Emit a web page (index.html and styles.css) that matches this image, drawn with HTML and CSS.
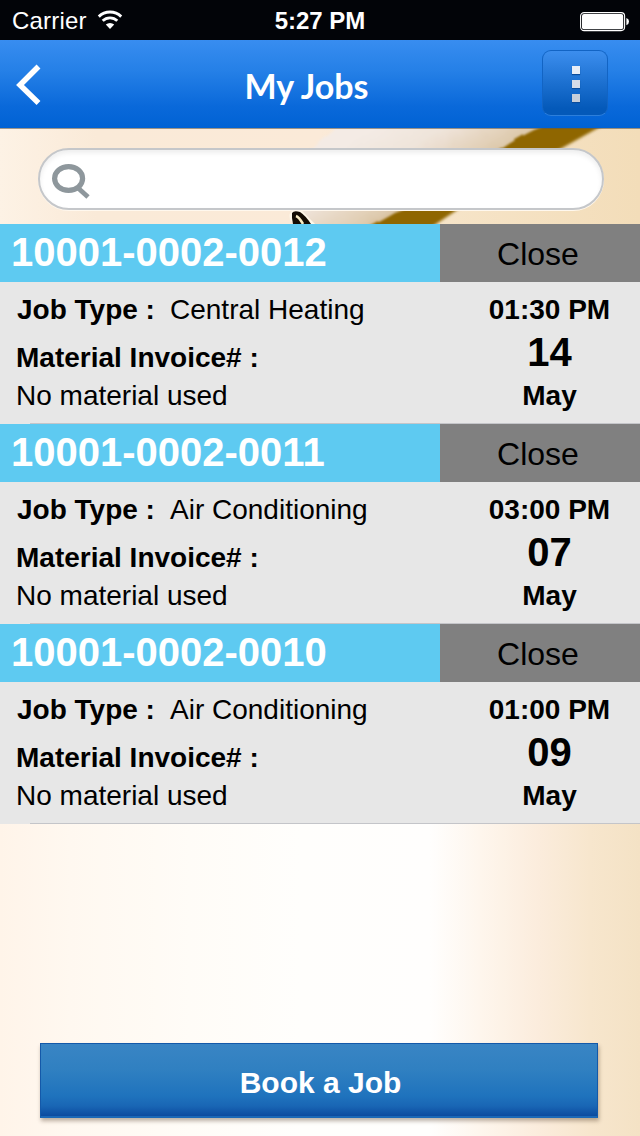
FILE: index.html
```html
<!DOCTYPE html>
<html lang="en">

<head>
    <meta charset="UTF-8">
    <meta name="viewport" content="width=device-width, initial-scale=1.0">
    <title>My Jobs</title>
    <link rel="stylesheet" href="styles.css">
</head>

<body>
    <div class="wrap">
        <div class="status">
            <div class="carrier">
                <span>Carrier</span>
                <svg class="wifi" width="26" height="20" viewBox="0 0 26 20">
                    <path d="M1.8 6.6a16 16 0 0 1 22.4 0" fill="none" stroke="#fff" stroke-width="2.9"/>
                    <path d="M5.7 10.8a10.4 10.4 0 0 1 14.6 0" fill="none" stroke="#fff" stroke-width="2.8"/>
                    <path d="M8.8 14.6a6 6 0 0 1 8.4 0L13 19z" fill="#fff"/>
                </svg>
            </div>
            <div class="time">5:27 PM</div>
            <svg class="battery" width="50" height="20" viewBox="0 0 50 20">
                <rect x=".6" y=".6" width="44" height="18" rx="3.5" fill="none" stroke="#fff" stroke-width="1.1"/>
                <rect x="2" y="2" width="41.2" height="15.2" rx="2" fill="#fff"/>
                <path d="M46.4 6q2.6.8 2.6 3.6t-2.6 3.6z" fill="#fff"/>
            </svg>
        </div>
        <div class="header">
            <svg class="back" width="26" height="42" viewBox="0 0 26 42">
                <path d="M22.500 2.500L4 21l18.500 18" fill="none" stroke="#fff" stroke-width="5.500"/>
            </svg>
            <h1>My Jobs</h1>
            <div class="menu">
                <span></span>
                <span></span>
                <span></span>
            </div>
        </div>
        <div class="search">
            <!-- pencil lying on paper -->
            <svg class="photo" width="640" height="96" viewBox="0 0 640 96">
                <defs>
                    <linearGradient id="paper" x1="0" x2="1" y1="0" y2="0">
                        <stop offset="0" stop-color="#fdf2e5"/>
                        <stop offset=".15" stop-color="#faead8"/>
                        <stop offset=".5" stop-color="#fbead8"/>
                        <stop offset=".7" stop-color="#f6e4c8"/>
                        <stop offset="1" stop-color="#f3ddb9"/>
                    </linearGradient>
                    <linearGradient id="wood" gradientUnits="userSpaceOnUse" x1="372" y1="0" x2="425" y2="92">
                        <stop offset="0" stop-color="#f4ebe5"/>
                        <stop offset=".35" stop-color="#efe4da"/>
                        <stop offset=".75" stop-color="#decaad"/>
                        <stop offset="1" stop-color="#c4a268"/>
                    </linearGradient>
                    <filter id="soft" x="-10%" y="-10%" width="120%" height="120%">
                        <feGaussianBlur stdDeviation="1.6"/>
                    </filter>
                    <filter id="rough" x="-5%" y="-10%" width="110%" height="120%">
                        <feTurbulence type="fractalNoise" baseFrequency=".06" numOctaves="2" seed="4"/>
                        <feDisplacementMap in="SourceGraphic" scale="4"/>
                        <feGaussianBlur stdDeviation="1"/>
                    </filter>
                </defs>
                <rect width="640" height="96" fill="url(#paper)"/>
                <path d="M430 -10H618L598 0L562 20Q500 52 454 84L430 100H360z" fill="#8f6603" filter="url(#soft)"/>
                <path d="M346 -8H560L534 2Q514 12 503 20Q450 66 395 85Q385 91 368 100L304 100L296 35z" fill="url(#wood)" filter="url(#rough)"/>
                <path d="M290 92q-2-8 4-10l8 1l13 13h-20z" fill="#fff8ea"/>
                <path d="M292 90v-5q2-3 8-1q6 4 11 12h-18z" fill="#140c04"/>
                <path d="M296 88q3 1 7 8" fill="none" stroke="#f9ecc4" stroke-width="2.600"/>
                <rect width="640" height="1" fill="#5f5a50" opacity=".6"/>
            </svg>
            <div class="field">
                <svg width="42" height="38" viewBox="0 0 42 38">
                    <ellipse cx="18.600" cy="15.500" rx="14" ry="11.900" fill="none" stroke="#8e979c" stroke-width="5.200"/>
                    <path d="M27.500 24.500L38 34" stroke="#8e979c" stroke-width="4.800"/>
                </svg>
            </div>
        </div>
        <ul class="jobs">
            <li>
                <div class="bar">
                    <span class="number">10001-0002-0012</span>
                    <span class="close">Close</span>
                </div>
                <div class="info">
                    <div class="detail">
                        <p class="type"><b>Job Type :</b><span>Central Heating</span></p>
                        <p class="invoice">Material Invoice# :</p>
                        <p class="material">No material used</p>
                    </div>
                    <div class="date">
                        <p class="hour">01:30 PM</p>
                        <p class="day">14</p>
                        <p class="month">May</p>
                    </div>
                </div>
            </li>
            <li>
                <div class="bar">
                    <span class="number">10001-0002-0011</span>
                    <span class="close">Close</span>
                </div>
                <div class="info">
                    <div class="detail">
                        <p class="type"><b>Job Type :</b><span>Air Conditioning</span></p>
                        <p class="invoice">Material Invoice# :</p>
                        <p class="material">No material used</p>
                    </div>
                    <div class="date">
                        <p class="hour">03:00 PM</p>
                        <p class="day">07</p>
                        <p class="month">May</p>
                    </div>
                </div>
            </li>
            <li>
                <div class="bar">
                    <span class="number">10001-0002-0010</span>
                    <span class="close">Close</span>
                </div>
                <div class="info">
                    <div class="detail">
                        <p class="type"><b>Job Type :</b><span>Air Conditioning</span></p>
                        <p class="invoice">Material Invoice# :</p>
                        <p class="material">No material used</p>
                    </div>
                    <div class="date">
                        <p class="hour">01:00 PM</p>
                        <p class="day">09</p>
                        <p class="month">May</p>
                    </div>
                </div>
            </li>
        </ul>
        <div class="footer">
            <div class="book">Book a Job</div>
        </div>
    </div>
</body>

</html>
```
FILE: styles.css
```css
body {
    margin: 0;
    font-family: "Liberation Sans", Arial, sans-serif;
    color: #000;
    overflow: hidden;
}

ul,
p,
h1 {
    margin: 0;
    padding: 0;
    list-style: none;
}

svg {
    display: block;
}

.wrap {
    width: 640px;
    height: 1136px;
    display: flex;
    flex-direction: column;
    background: linear-gradient(to right, #fff4e9 0, #fff8f0 70px, #fffcf7 190px, #fffefc 300px, #fffefd 430px, #fef6ed 480px, #fbecdc 540px, #f7e6cd 590px, #f4e2c5 640px);
}

.status {
    height: 40px;
    display: grid;
    grid-template-columns: 1fr auto 1fr;
    align-items: center;
    background-color: #020408;
    color: #fff;
    font-size: 24px;
    line-height: 42px;
}

.carrier {
    display: flex;
    align-items: center;
    padding-left: 12px;
    letter-spacing: 0.2px;
}

.wifi {
    margin-left: 10px;
    margin-bottom: 2px;
}

.time {
    font-weight: bold;
    font-size: 24px;
}

.battery {
    justify-self: end;
    margin-right: 10px;
    margin-top: 2px;
}

.header {
    height: 88px;
    box-sizing: border-box;
    padding: 0 32px 0 16px;
    display: grid;
    grid-template-columns: 66px 1fr 66px;
    align-items: center;
    background: linear-gradient(#388df0, #2580e7 35%, #0a69da 75%, #0062d4);
}

.back {
    margin-top: 1px;
}

.header h1 {
    padding-top: 4px;
    padding-right: 11px;
    text-align: center;
    font: bold 34px/44px Lato, sans-serif;
    color: #fff;
}

.menu {
    width: 66px;
    height: 66px;
    box-sizing: border-box;
    margin-bottom: 2px;
    padding: 2px 0 0 1px;
    display: flex;
    flex-direction: column;
    align-items: center;
    justify-content: center;
    gap: 6px;
    border: 1px solid #1264c4;
    border-bottom-color: #2c7fdc;
    border-radius: 9px;
    background: linear-gradient(#3c8eee, #1c70d0 50%, #0459b9 90%);
}

.menu span {
    width: 8px;
    height: 8px;
    background: #e8edf6;
    box-shadow: 0 1px 1px #0a4c9c;
}

.menu span:nth-child(2) {
    background: #d5dce9;
}

.menu span:nth-child(3) {
    background: #c7cfda;
}

.search {
    position: relative;
    height: 96px;
    box-sizing: border-box;
    padding: 20px 36px 0 38px;
}

.photo {
    position: absolute;
    left: 0;
    top: 0;
}

.field {
    position: relative;
    height: 62px;
    box-sizing: border-box;
    padding: 13px 0 0 10px;
    border: 2px solid #c5c7ca;
    border-radius: 31px;
    background-color: #fff;
    box-shadow: inset 0 3px 5px #eee, 0 1px 0 #fff8ee;
}

.jobs li {
    height: 200px;
}

.bar {
    height: 58px;
    display: flex;
    background-color: #808080;
}

.number {
    width: 440px;
    box-sizing: border-box;
    padding-left: 11px;
    font-size: 40px;
    font-weight: bold;
    line-height: 56px;
    color: #fff;
    background-color: #5ecaf1;
}

.close {
    flex: 1;
    padding-right: 4px;
    text-align: center;
    font-size: 32px;
    line-height: 60px;
}

.info {
    height: 142px;
    display: flex;
    font-size: 28px;
    background: linear-gradient(#c4c5c9, #c4c5c9) 30px 100% / 100% 1px no-repeat #e7e7e7;
}

.detail {
    width: 440px;
    box-sizing: border-box;
    padding-left: 16px;
}

.type {
    display: flex;
    line-height: 56px;
}

.type b {
    width: 153px;
    padding-left: 1px;
}

.invoice {
    font-weight: bold;
    line-height: 40px;
}

.material {
    line-height: 35px;
}

.date {
    flex: 1;
    padding-left: 19px;
    text-align: center;
    font-weight: bold;
}

.hour {
    line-height: 56px;
}

.day {
    font-size: 40px;
    line-height: 28px;
}

.month {
    line-height: 60px;
}

.footer {
    margin-top: auto;
    padding: 0 42px 18px 40px;
}

.book {
    height: 75px;
    box-sizing: border-box;
    padding-left: 3px;
    border: 1px solid #1459a9;
    border-bottom: 2px solid #1b68b7;
    text-align: center;
    font-size: 30px;
    font-weight: bold;
    line-height: 78px;
    color: #fff;
    background: linear-gradient(#3985c4, #3080c1 35%, #1f73bd 72%, #1966b5 86%, #0c4b9f);
    box-shadow: 1px 3px 4px rgba(80, 60, 40, 0.4);
}
```
